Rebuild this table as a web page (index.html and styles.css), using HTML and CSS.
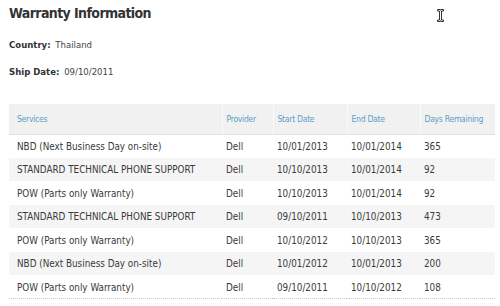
FILE: index.html
```html
<!DOCTYPE html>
<html>
<head>
<meta charset="utf-8">
<title>Warranty Information</title>
<link rel="stylesheet" href="styles.css">
</head>
<body>
<div class="page">
  <h1 class="title">Warranty Information</h1>
  <p class="info"><span class="label">Country:</span> Thailand</p>
  <p class="info ship"><span class="label">Ship Date:</span> 09/10/2011</p>
  <table class="warranty">
    <colgroup>
      <col class="c-svc">
      <col class="c-prov">
      <col class="c-start">
      <col class="c-end">
      <col class="c-days">
    </colgroup>
    <thead>
      <tr>
        <th>Services</th>
        <th>Provider</th>
        <th>Start Date</th>
        <th>End Date</th>
        <th>Days Remaining</th>
      </tr>
    </thead>
    <tbody>
      <tr><td>NBD (Next Business Day on-site)</td><td>Dell</td><td>10/01/2013</td><td>10/01/2014</td><td>365</td></tr>
      <tr><td>STANDARD TECHNICAL PHONE SUPPORT</td><td>Dell</td><td>10/10/2013</td><td>10/01/2014</td><td>92</td></tr>
      <tr><td>POW (Parts only Warranty)</td><td>Dell</td><td>10/10/2013</td><td>10/01/2014</td><td>92</td></tr>
      <tr><td>STANDARD TECHNICAL PHONE SUPPORT</td><td>Dell</td><td>09/10/2011</td><td>10/10/2013</td><td>473</td></tr>
      <tr><td>POW (Parts only Warranty)</td><td>Dell</td><td>10/10/2012</td><td>10/10/2013</td><td>365</td></tr>
      <tr><td>NBD (Next Business Day on-site)</td><td>Dell</td><td>10/01/2012</td><td>10/01/2013</td><td>200</td></tr>
      <tr><td>POW (Parts only Warranty)</td><td>Dell</td><td>09/10/2011</td><td>10/10/2012</td><td>108</td></tr>
    </tbody>
  </table>
  <svg class="cursor" width="7" height="13" viewBox="0 0 7 13" aria-hidden="true">
    <path d="M0.5 0.5h2.5v0.5h1v-0.5h2.5v1.5h-2v9h2v1.5h-2.5v-0.5h-1v0.5h-2.5v-1.5h2v-9h-2z" fill="#fff" stroke="#333" stroke-width="1"/>
  </svg>
</div>
</body>
</html>
```
FILE: styles.css
```css
html, body {
  margin: 0;
  background: #fff;
}
.page {
  position: relative;
  width: 500px;
  height: 306px;
  overflow: hidden;
  font-family: "DejaVu Sans Condensed", "DejaVu Sans", sans-serif;
  color: #333;
}
.title {
  margin: 0;
  padding: 4px 0 0 9px;
  font-size: 14px;
  line-height: 18px;
  font-weight: bold;
  letter-spacing: -0.6px;
  color: #333;
}
.info {
  margin: 16px 0 0 0;
  padding-left: 9px;
  font-size: 9.5px;
  line-height: 14px;
  color: #444;
}
.info.ship {
  margin-top: 13px;
}
.label {
  font-weight: bold;
  color: #333;
  margin-right: 2px;
}
.warranty {
  margin: 25px 0 0 9px;
  width: 486px;
  border-collapse: collapse;
  table-layout: fixed;
  border-bottom: 1px dotted #c8c8c8;
}
.c-svc { width: 213px; }
.c-prov { width: 51px; }
.c-start { width: 74px; }
.c-end { width: 73px; }
.c-days { width: 75px; }
.warranty th,
.warranty td {
  box-sizing: border-box;
  padding: 0 0 0 4px;
  text-align: left;
  white-space: nowrap;
  overflow: hidden;
}
.warranty th:first-child,
.warranty td:first-child {
  padding-left: 8px;
}
.warranty th {
  height: 30px;
  background: #f1f1f1;
  border-bottom: 1px solid #e2e2e2;
  border-left: 1px solid #fafafa;
  font-weight: normal;
  font-size: 8.6px;
  letter-spacing: -0.3px;
  color: #5a9ec6;
}
.warranty th:first-child {
  border-left: none;
}
.warranty td {
  height: 23.5px;
  padding-top: 1px;
  font-size: 9.8px;
  color: #3a3a3a;
}
.warranty tbody tr:nth-child(even) td {
  background: #f5f5f5;
}
.cursor {
  position: absolute;
  left: 437px;
  top: 9px;
}
```
